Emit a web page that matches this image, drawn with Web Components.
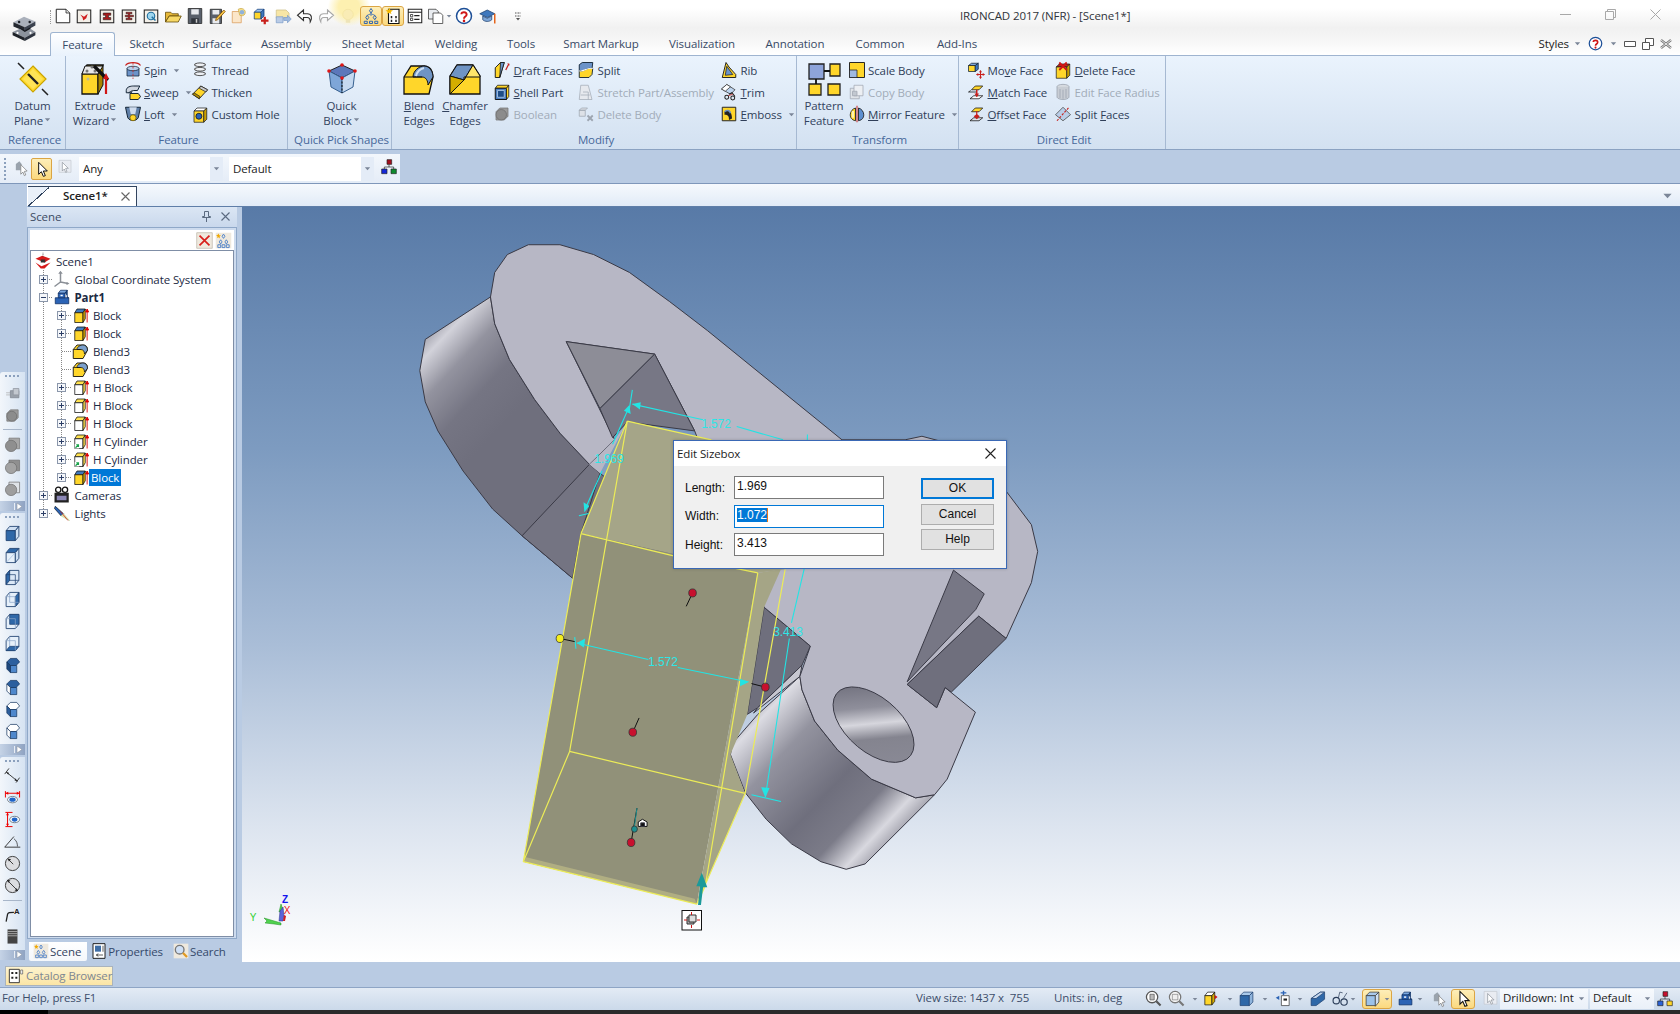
<!DOCTYPE html>
<html>
<head>
<meta charset="utf-8">
<title>IRONCAD 2017</title>
<style>
html, body { margin: 0; height: 100%; overflow: hidden; background: #b9cbe3; }
body { font: 11.5px "Open Sans", "Noto Sans", sans-serif; letter-spacing: -.1px; color: #2f3e58; }
</style>
</head>
<body>
<cad-app></cad-app>
<script>
'use strict';
(function () {
    const DOC = '<path d="M3 3h13l5 5v13H3z" fill="#fff" stroke="#222" stroke-width="1.3"/><path d="M16 3v5h5" fill="#ddd" stroke="#222"/>';
    const BOX = '<rect x="3" y="4" width="18" height="17" fill="#f3efe8" stroke="#222" stroke-width="1.4"/>';
    const YBOX = '<path d="M5 9l3-5h11l-3 5z" fill="#3f78bd" stroke="#111"/><path d="M5 9h11v13H5z" fill="#ffd62a" stroke="#111"/><path d="M16 9l3-5v13l-3 5z" fill="#d9a800" stroke="#111"/><path d="M21.500 22V5M19.500 8l2-4 2 4z" fill="#d00" stroke="#d00" stroke-width="1.200"/>';
    const HBOX = '<path d="M5 9l3-5h11l-3 5z" fill="#ffe14d" stroke="#111"/><path d="M5 9h11v13H5z" fill="#fff" stroke="#111"/><path d="M16 9l3-5v13l-3 5z" fill="#ffe14d" stroke="#111"/><path d="M21.500 22V5M19.500 8l2-4 2 4z" fill="#d00" stroke="#d00" stroke-width="1.200"/>';
    const GCUBE = '<path d="M4 9l5-5h11v11l-5 5H4z" fill="#9b9b9b" stroke="#777"/><circle cx="11" cy="13" r="7" fill="#8c8c8c" stroke="#6d6d6d"/>';
    const FACE = '<path d="M6 9l5-5h10l-5 5z" fill="#ffd62a" stroke="#111"/>';

    const ICONS = {
        doc: DOC,
        docred: BOX + '<path d="M7 10l5 3 5-4-2 6-4 3-1-4z" fill="#d01c1c"/>',
        doci: BOX + '<path d="M7 8h10v3h-3v3h3v3H7v-3h3v-3H7z" fill="#a81c1c" stroke="#111" stroke-width=".7"/>',
        doce: BOX + '<path d="M8 7h8v2h-3v2h5v2h-5v2h3v2H8v-2h3v-2H7v-2h4V9H8z" fill="#a81c1c" stroke="#111" stroke-width=".6"/>',
        docview: BOX + '<circle cx="12" cy="12" r="5" fill="#9fd6ef" stroke="#1f6f9f" stroke-width="1.500"/><path d="M13 13l5 5" stroke="#1f6f9f" stroke-width="2"/>',
        open: '<path d="M2 7h7l2 2h8v3H7l-5 8z" fill="#e7b93a" stroke="#5c4300"/><path d="M7 12h16l-4 8H2z" fill="#f7d866" stroke="#5c4300"/>',
        save: '<path d="M3 2h18v20H3z" fill="#59606b" stroke="#222"/><path d="M7 3h10v7H7z" fill="#e8eaee"/><path d="M7 15h10v7H7z" fill="#30353c"/><path d="M13 16h2v5h-2z" fill="#ccc"/>',
        saveas: '<path d="M3 3h15v19H3z" fill="#59606b" stroke="#222"/><path d="M6 4h9v6H6zM6 15h9v7H6z" fill="#e8eaee"/><path d="M11 15L21 4l2 2-10 11-3 1z" fill="#f7c548" stroke="#7a4a00"/>',
        bulbdoc: '<path d="M3 6h9l3 3v12H3z" fill="#fbe6c9" stroke="#d99b5a"/><path d="M11 3c5-3 11 1 9 6-1 3-5 3-7 2z" fill="#f7df88" stroke="#c9a94a"/><circle cx="16" cy="7" r="3" fill="#8fb2dc"/>',
        addblock: '<path d="M3 7l4-4h9l-4 4z" fill="#9cc3ee" stroke="#123c7a"/><path d="M3 7h9v9H3z" fill="#ffd62a" stroke="#123c7a"/><path d="M12 7l4-4v9l-4 4z" fill="#3f78bd" stroke="#123c7a"/><path d="M17 13v10M12 18h10" stroke="#c8201c" stroke-width="3"/>',
        fadeexport: '<path d="M3 4h13l4 4v7H3z" fill="#f7e6a6" stroke="#cfc08a"/><path d="M3 13h9v8H3z" fill="#b9cbe6" stroke="#7f9fca"/><path d="M13 14h5v-3l5 5-5 5v-3h-5z" fill="#9db9e0" stroke="#7f9fca"/>',
        undo: '<path d="M10 4L2 11l8 7v-4h5c3 0 4 2 4 6 3-5 2-11-4-11h-5z" fill="#fff" stroke="#333" stroke-width="1.500"/>',
        redo: '<path d="M14 4l8 7-8 7v-4H9c-3 0-4 2-4 6-3-5-2-11 4-11h5z" fill="#fff" stroke="#a8a8a8" stroke-width="1.500"/>',
        bulb: '<circle cx="12" cy="10" r="7" fill="#f9ecb5" stroke="#f2e3a0"/><path d="M9 17h6v4H9z" fill="#eee4b8"/>',
        treeflow: '<path d="M12 2l2 3-2 3-2-3zM7 11l2 3-2 3-2-3zM17 11l2 3-2 3-2-3z" fill="none" stroke="#2b63b5" stroke-width="1.300"/><path d="M3 19h4v3H3zM10 19h4v3h-4zM17 19h4v3h-4z" fill="none" stroke="#2b63b5" stroke-width="1.300"/><path d="M12 8v4M7 11l5-2 5 2" stroke="#2b63b5" fill="none"/>',
        treestar: '<path d="M6 3h14v19H6z" fill="#fff" stroke="#111" stroke-width="1.500"/><path d="M9 12h2v3H9zM15 12h2v3h-2zM9 17h2v3H9zM15 17h2v3h-2z" fill="#222"/><path d="M7 1l1.500 3 3.500.5-3 2 1 3-3-2-3 2 1-3-3-2 3.500-.5z" fill="#f5b800"/>',
        list: '<path d="M3 3h18v18H3z" fill="#fff" stroke="#222" stroke-width="1.400"/><path d="M3 7h18" stroke="#222" stroke-width="1.400"/><path d="M6 10h3v3H6zM6 15h3v3H6z" fill="none" stroke="#222"/><path d="M11 11.500h7M11 16.500h7" stroke="#222" stroke-width="1.400"/>',
        copy: '<path d="M2 3h10l3 3v10H2z" fill="#e9ecf0" stroke="#333"/><path d="M8 8h10l3 3v11H8z" fill="#fff" stroke="#333"/>',
        help: '<circle cx="12" cy="12" r="10" fill="#fff" stroke="#1d4f97" stroke-width="2"/><path d="M8.500 9.500C8.500 6 15.500 6 15.500 10c0 3-3.500 2.500-3.500 5.500" fill="none" stroke="#d01616" stroke-width="2.600"/><circle cx="12" cy="18.500" r="1.700" fill="#d01616"/>',
        cap: '<path d="M1 9l10-5 10 5-10 5z" fill="#3f78bd" stroke="#1c3f6e"/><path d="M5 12v5c3 3 9 3 12 0v-5l-6 3z" fill="#7fa7d8" stroke="#1c3f6e"/><path d="M21 9v13" stroke="#e5641b" stroke-width="2"/>',
        arrow: '<path d="M3 8h18l-9 10z" fill="#7b8698"/>',
        grip: '<path d="M6 6h12M6 12h12" stroke="#555" stroke-width="2" stroke-dasharray="2 1"/><path d="M8 16h8l-4 5z" fill="#555"/>',

        spin: '<path d="M4 10h16v10H4z" fill="#6b93c9" stroke="#123"/><ellipse cx="12" cy="10" rx="8" ry="3" fill="#b9d0ec" stroke="#123"/><path d="M12 2v22" stroke="#c8201c" stroke-dasharray="3 2"/><path d="M2 6c3-5 17-5 20 0" fill="none" stroke="#c8201c" stroke-width="1.600"/>',
        sweep: '<path d="M3 10c0-5 6-6 10-6h8l-3 6h-5c-2 0-3 1-3 3H3z" fill="#cfd6e0" stroke="#123" stroke-width="1.300"/><path d="M8 14h11l3 4-3 4H8z" fill="#ffd62a" stroke="#123" stroke-width="1.300"/><path d="M6 13l5-3" stroke="#123"/>',
        loft: '<path d="M2 3h20l-3 14c-3 5-11 5-14 0z" fill="#5f7fa8" stroke="#123" stroke-width="1.300"/><path d="M7 3h10l-2 9H9z" fill="#cfdcee"/><circle cx="12" cy="17" r="4" fill="#ffd62a" stroke="#7a6000"/>',
        thread: '<path d="M5 4c4-2 10-2 14 0v2C15 8 9 8 5 6zM5 10c4-2 10-2 14 0v2c-4 2-10 2-14 0zM5 16c4-2 10-2 14 0v2c-4 2-10 2-14 0z" fill="#eef1f5" stroke="#444" stroke-width="1.200"/>',
        thicken: '<path d="M2 15L13 4l9 5-11 12z" fill="#ffd62a" stroke="#222" stroke-width="1.200"/><path d="M13 4l9 5-2 3-9-5z" fill="#c9c9c9" stroke="#222"/><path d="M2 15l9 6 1-3-8-5z" fill="#b38f00" stroke="#222"/>',
        hole: '<path d="M4 8l4-4h13l-4 4z" fill="#fff" stroke="#222"/><path d="M4 8h13v15H4z" fill="#ffd62a" stroke="#222"/><path d="M17 8l4-4v15l-4 4z" fill="#c99f00" stroke="#222"/><circle cx="10.500" cy="15" r="4" fill="#2b63b5" stroke="#111"/>',
        draft: '<path d="M3 9l7-7h5L9 22H3z" fill="#ffd62a" stroke="#111" stroke-width="1.200"/><path d="M10 2h5L9 22z" fill="#6b93c9" stroke="#111"/><path d="M17 12l4-8" stroke="#c8201c" stroke-width="1.600"/><path d="M19 3l3 .500-.5 3z" fill="#c8201c"/>',
        shell: '<path d="M3 7l3-4h15l-3 4z" fill="#ffd62a" stroke="#111"/><path d="M3 7h15v15H3z" fill="#4d80c2" stroke="#111" stroke-width="1.300"/><path d="M18 7l3-4v15l-3 4z" fill="#ffd62a" stroke="#111"/><path d="M6 10h9v9H6z" fill="#1f4d87" stroke="#bcd4ef"/>',
        boolean: GCUBE,
        split: '<path d="M3 5l4-3h14l-1 9-5 2H3z" fill="#6b93c9" stroke="#123" stroke-width="1.200"/><path d="M3 13c6 2 10-5 18-3l-1 8-4 4H3z" fill="#ffd62a" stroke="#123" stroke-width="1.200"/><path d="M3 13c6 2 10-5 18-3" fill="none" stroke="#fff" stroke-width="1.500"/>',
        stretch: '<path d="M5 3h10l5 19H3z" fill="#e6e9ee" stroke="#a3abb6"/><path d="M8 12h7v10M5 16h12" stroke="#a3abb6" fill="none"/>',
        delbody: '<path d="M3 7l3-3h8l-3 3zM3 7h8v8H3z" fill="#dde1e7" stroke="#9da5b0"/><path d="M14 14l7 7M21 14l-7 7" stroke="#9da5b0" stroke-width="2.400"/>',
        rib: '<path d="M3 22L8 2l4 6 9 10v4z" fill="#ffd62a" stroke="#222" stroke-width="1.300"/><path d="M7 19L9 7l8 11z" fill="#6b93c9" stroke="#222"/>',
        trim: '<path d="M2 8l7-6 11 7-6 6z" fill="#bcd3ee" stroke="#333"/><path d="M2 8l7-6 5 3-7 6z" fill="#fff" stroke="#333"/><path d="M12 15l4-2 4 5" stroke="#222" fill="none" stroke-width="1.400"/><circle cx="9" cy="19" r="2.600" fill="none" stroke="#222" stroke-width="1.400"/><circle cx="17" cy="20" r="2.600" fill="none" stroke="#222" stroke-width="1.400"/><path d="M11 17l6-2" stroke="#c8201c"/>',
        emboss: '<path d="M3 3h18v18H3z" fill="#ffd62a" stroke="#222" stroke-width="1.300"/><path d="M6 9c5-5 10 0 10 9l-4 2c0-5-1-7-6-7z" fill="#222"/><path d="M6 9c3-3 7-2 8 2" stroke="#6b93c9" fill="none" stroke-width="2"/>',
        scale: '<path d="M2 2h20v20H2z" fill="#ffd62a" stroke="#222" stroke-width="1.300"/><path d="M2 12h10v10H2z" fill="#9fb9e0" stroke="#222"/>',
        copybody: '<path d="M3 7h12v14H3z" fill="#dfe3e8" stroke="#a0a7b1"/><path d="M8 3h12v14H8z" fill="#eceff3" stroke="#a0a7b1"/><path d="M6 11h6v6H6z" fill="#c2c8d0" stroke="#a0a7b1"/>',
        mirror: '<path d="M10 4c-4 1-7 5-7 9 0 4 2 7 7 8z" fill="#ffd62a" stroke="#222" stroke-width="1.200"/><path d="M14 4c4 1 7 5 7 9 0 4-2 7-7 8z" fill="#5d8fd0" stroke="#222" stroke-width="1.200"/><path d="M12 1v22" stroke="#c8201c" stroke-width="1.300"/><path d="M5 8h3v9H5z" fill="#fff3b0"/>',
        moveface: '<path d="M2 6l4-3h9l-4 3z" fill="#7da6dc" stroke="#123"/><path d="M2 6h9v8H2z" fill="#ffd62a" stroke="#123"/><path d="M11 6l4-3v8l-4 3z" fill="#3f78bd" stroke="#123"/><path d="M18 13v10M13 18h10" stroke="#c8201c" stroke-width="1.400"/><path d="M18 12l2 3h-4zM18 24l2-3h-4zM12 18l3-2v4zM24 18l-3-2v4z" fill="#c8201c"/>',
        matchface: FACE + '<path d="M4 21l5-4h12l-5 4z" fill="#fff" stroke="#111"/><path d="M13 9v9" stroke="#c8201c" stroke-width="2"/><path d="M10 14h6l-3 5z" fill="#c8201c"/><path d="M2 12h10M2 12l3-2" stroke="#111"/>',
        offsetface: FACE + '<path d="M4 21l5-4h12l-5 4z" fill="#dfe3e8" stroke="#111"/><path d="M13 8v10" stroke="#c8201c" stroke-width="1.600"/><path d="M9 15l4 4 4-4-4-3z" fill="#c8201c"/>',
        deleteface: '<path d="M3 8l4-4h14l-4 4z" fill="#c8201c" stroke="#222"/><path d="M3 8h14v15H3z" fill="#ffd62a" stroke="#222"/><path d="M17 8l4-4v15l-4 4z" fill="#c99f00" stroke="#222"/><path d="M7 2l10 10M17 2L7 12" stroke="#d01616" stroke-width="2.400"/>',
        editradius: '<ellipse cx="12" cy="5" rx="8" ry="3.200" fill="#d7dbe1" stroke="#9aa2ad"/><path d="M4 5v14c2 4 14 4 16 0V5" fill="#c8cdd4" stroke="#9aa2ad"/><path d="M8 8v12M12 9v12M16 8v12" stroke="#9aa2ad"/>',
        splitfaces: '<path d="M2 13l10-10 10 10-10 8z" fill="#b9cde8" stroke="#444"/><path d="M4 21L20 3" stroke="#c8201c" stroke-width="1.500" stroke-dasharray="3 2"/>',

        scene: '<path d="M2 9l9-4 11 4-8 5z" fill="#d61a1a"/><path d="M2 14l8 5 12-5-8 8H9z" fill="#d61a1a"/><path d="M9 10h6v4H9z" fill="#333"/><path d="M12 1v5" stroke="#333" stroke-dasharray="1 1"/>',
        coord: '<path d="M10 3v13M10 16l10 2M10 16l-8 6" stroke="#8a8f96" stroke-width="2" fill="none"/><path d="M10 1l3 4H7zM22 18l-4 2v-4z" fill="#8a8f96"/>',
        part: '<path d="M3 13h18v8H3z" fill="#2b63b5" stroke="#0c2c60"/><path d="M7 7l3-4h9l-3 4z" fill="#79a7e0" stroke="#0c2c60"/><path d="M7 7h9v6H7z" fill="#2b63b5" stroke="#0c2c60"/><path d="M16 7l3-4v10h2" fill="#1b477f" stroke="#0c2c60"/><path d="M10 9h3v2h-3z" fill="#fff"/>',
        yblock: YBOX, hblock: HBOX,
        hcyl: HBOX + '<path d="M5 16h6v6H5z" fill="#fff"/><path d="M6 21l4-4M7 17h3v3" stroke="#1aa34a" stroke-width="1.500" fill="none"/>',
        blend: '<path d="M3 10l5-6h9c4 0 5 4 5 7l-6 11H3z" fill="#ffd62a" stroke="#111" stroke-width="1.200"/><path d="M8 10c0-4 5-6 8-6 5 0 6 5 6 7l-4 5c0-4-2-6-5-6z" fill="#7a9fcc" stroke="#111"/><path d="M3 10h10" stroke="#111"/>',
        camera: '<circle cx="7" cy="5" r="3.500" fill="#fff" stroke="#111" stroke-width="1.800"/><circle cx="16" cy="5" r="3.500" fill="#fff" stroke="#111" stroke-width="1.800"/><path d="M2 9h19v13H2z" fill="#222"/><path d="M5 13h13v6H5z" fill="#8b87b5"/>',
        lights: '<path d="M3 3l11 10-3 3L2 6z" fill="#2b63b5" stroke="#123"/><path d="M11 16l3-3 8 9z" fill="#f2e6a0" stroke="#bda"/><path d="M10 10l10 12" stroke="#c8201c"/>',
        clear: '<path d="M1 1h22v22H1z" fill="#efe9de" stroke="#bdb6a9"/><path d="M5 5l14 14M19 5L5 19" stroke="#d8201c" stroke-width="2.400"/>',
        find: '<path d="M1 1h22v22H1z" fill="#efe9de"/><path d="M12 3l2 3-2 3-2-3zM8 11l2 3-2 3-2-3zM16 11l2 3-2 3-2-3z" fill="none" stroke="#4a80c8" stroke-width="1.300"/><path d="M4 18h4v4H4zM10 18h4v4h-4zM16 18h4v4h-4z" fill="none" stroke="#4a80c8" stroke-width="1.300"/><path d="M5 2l1 2.500 2.500.5-2 1.500.5 2.500L5 7.500 3 8.500 3.500 6 1.500 4.500 4 4z" fill="#f0a800"/>',
        props: '<path d="M3 1h18v22H3z" fill="#fff" stroke="#111" stroke-width="1.400"/><path d="M6 4h9v9H6z" fill="#3f6ea6"/><path d="M17 4h2v9h-2z" fill="#888"/><path d="M18 18H8M8 18l3-2M8 18l3 2" stroke="#111" fill="none"/>',
        search: '<path d="M1 1h22v22H1z" fill="#efe9de"/><circle cx="10" cy="10" r="6.500" fill="#cfe0f6" stroke="#777" stroke-width="2"/><path d="M15 15l6 6" stroke="#e09a22" stroke-width="3.400"/>',
        catalog: '<path d="M2 2h15v20H2z" fill="#fff" stroke="#222" stroke-width="1.300"/><path d="M5 6h3v3H5zM11 6h3v3h-3zM5 13h3v3H5zM11 13h3v3h-3z" fill="#222"/><path d="M19 3h3v6h-3z" fill="#fff" stroke="#555"/>',

        stk1: '<path d="M3 11h6M3 14h6" stroke="#aaa"/><path d="M9 8h12v10H9z" fill="#9aa1aa" stroke="#7d848e"/><path d="M13 5h8v9H13z" fill="#c3c8cf" stroke="#8b919a"/>',
        stk2: GCUBE,
        stk3: '<path d="M7 3h15v15H7z" fill="#a6a6a6" stroke="#777"/><circle cx="10" cy="14" r="8" fill="#8f8f8f" stroke="#6f6f6f"/>',
        stk4: '<path d="M7 3h15v15H7z" fill="#8f8f8f" stroke="#6f6f6f"/><circle cx="10" cy="14" r="8" fill="#a3a3a3" stroke="#6f6f6f"/>',
        stk5: '<path d="M7 3h15v15H7z" fill="#dfe3e8" stroke="#6f6f6f"/><circle cx="10" cy="14" r="8" fill="#9e9e9e" stroke="#6f6f6f"/>',
        v1: '<path d="M3 8l5-6h13l-5 6z" fill="#cfe0f3" stroke="#1c3f6e" stroke-width="1.200"/><path d="M3 8h13v14H3z" fill="#2f68a8" stroke="#1c3f6e" stroke-width="1.200"/><path d="M16 8l5-6v14l-5 6z" fill="#cfe0f3" stroke="#1c3f6e" stroke-width="1.200"/>',
        v2: '<path d="M3 8l5-6h13l-5 6z" fill="#2f68a8" stroke="#1c3f6e" stroke-width="1.200"/><path d="M3 8h13v14H3z" fill="#e6f0fa" stroke="#1c3f6e" stroke-width="1.200"/><path d="M16 8l5-6v14l-5 6z" fill="#cfe0f3" stroke="#1c3f6e" stroke-width="1.200"/><path d="M3 22l13-14" stroke="#9fbbdc"/>',
        v3: '<path d="M3 8l5-6h13v14l-5 6H3z" fill="#dbe8f6" stroke="#1c3f6e" stroke-width="1.200"/><path d="M3 8l5-6v14l-5 6z" fill="#2f68a8" stroke="#1c3f6e" stroke-width="1.200"/><path d="M8 16h13M3 8h13v14" fill="none" stroke="#1c3f6e"/>',
        v4: '<path d="M3 8l5-6h13v14l-5 6H3z" fill="#e6f0fa" stroke="#1c3f6e" stroke-width="1.200"/><path d="M16 8l5-6v14l-5 6z" fill="#2f68a8" stroke="#1c3f6e" stroke-width="1.200"/><path d="M3 8h13v14M8 2v14h13" fill="none" stroke="#8aa5c8"/>',
        v5: '<path d="M3 8l5-6h13v14l-5 6H3z" fill="#e6f0fa" stroke="#1c3f6e" stroke-width="1.200"/><path d="M8 2h13v14H8z" fill="#2f68a8" stroke="#1c3f6e"/><path d="M3 8h13v14" fill="none" stroke="#8aa5c8"/>',
        v6: '<path d="M3 8l5-6h13v14l-5 6H3z" fill="#e6f0fa" stroke="#1c3f6e" stroke-width="1.200"/><path d="M3 22l5-6h13l-5 6z" fill="#2f68a8" stroke="#1c3f6e"/><path d="M3 8h13v14M8 2v14" fill="none" stroke="#8aa5c8"/>',
        c1: '<path d="M4 7l5-5h9l4 5-5 5H9z" fill="#2c5f9e" stroke="#13315a"/><path d="M9 12h9v10H9z" fill="#4f88cc" stroke="#13315a"/><path d="M4 7l5 5v10L4 17z" fill="#1f4a80" stroke="#13315a"/>',
        c2: '<path d="M4 7l5-5h9l4 5-5 5H9z" fill="#2c5f9e" stroke="#13315a"/><path d="M9 12h9v10H9z" fill="#4f88cc" stroke="#13315a"/><path d="M4 7l5 5v10L4 17z" fill="#fff" stroke="#13315a"/>',
        c3: '<path d="M4 7l5-5h9l4 5-5 5H9z" fill="#fff" stroke="#13315a"/><path d="M9 12h9v10H9z" fill="#4f88cc" stroke="#13315a"/><path d="M4 7l5 5v10L4 17z" fill="#2c5f9e" stroke="#13315a"/>',
        c4: '<path d="M4 7l5-5h9l4 5-5 5H9z" fill="#fff" stroke="#13315a"/><path d="M9 12h9v10H9z" fill="#4f88cc" stroke="#13315a"/><path d="M4 7l5 5v10L4 17z" fill="#fff" stroke="#13315a"/>',
        mdim: '<path d="M3 7l16 13M7 2L1 10M22 15l-5 7" stroke="#222" fill="none" stroke-width="1.200"/><path d="M3 7l4 1-1 3zM19 20l-4-1 1-3z" fill="#222"/>',
        hdim: '<path d="M2 3v9M22 3v9M3 6h18" stroke="#e00" stroke-width="1.400"/><path d="M2 6l4-2v4zM22 6l-4-2v4z" fill="#e00"/><ellipse cx="12" cy="15" rx="7" ry="4.500" fill="#fff" stroke="#456"/><ellipse cx="12" cy="15" rx="4.500" ry="3" fill="#1f64c8"/>',
        vdim: '<path d="M2 2h10M2 22h10M5 3v18" stroke="#e00" stroke-width="1.400"/><path d="M5 2l-2 4h4zM5 22l-2-4h4z" fill="#e00"/><ellipse cx="15" cy="12" rx="7" ry="4.500" fill="#fff" stroke="#456"/><ellipse cx="15" cy="12" rx="4" ry="3" fill="#1f64c8"/>',
        adim: '<path d="M1 20h22M1 20L14 5" stroke="#222" fill="none" stroke-width="1.200"/><path d="M14 8c4 3 5 7 5 11" stroke="#222" fill="none"/>',
        rdim: '<circle cx="12" cy="12" r="10" fill="#dcdde0" stroke="#333" stroke-width="1.300"/><path d="M13 13L6 6" stroke="#222" stroke-width="1.200"/><path d="M5 5l5 1-3 3z" fill="#222"/>',
        ddim: '<circle cx="12" cy="12" r="10" fill="#dcdde0" stroke="#333" stroke-width="1.300"/><path d="M5 5l14 14" stroke="#222" stroke-width="1.200"/><path d="M4 4l5 1-3 3zM20 20l-5-1 3-3z" fill="#222"/>',
        leader: '<path d="M3 22l2-10c0-3 3-3 9-3" fill="none" stroke="#222" stroke-width="1.800"/><text x="14" y="11" font-family="Liberation Sans" font-size="11" font-weight="700" fill="#222">A</text>',
        hatch: '<path d="M5 2h14v20H5z" fill="#444"/><path d="M5 5h14M5 8h14M5 11h14" stroke="#ccc"/>',

        zoomfit: '<circle cx="10" cy="10" r="8" fill="#fff" stroke="#555" stroke-width="1.800"/><path d="M7 6h6v8H7z" fill="#bbb" stroke="#555"/><path d="M16 16l6 6" stroke="#555" stroke-width="3"/>',
        zoomwin: '<circle cx="10" cy="10" r="8" fill="#fff" stroke="#777" stroke-width="1.800"/><path d="M6 6h8v8H6z" fill="#eee" stroke="#777"/><path d="M16 16l6 6" stroke="#777" stroke-width="3"/>',
        boxred: '<path d="M4 8l4-5h10l-4 5z" fill="#fff" stroke="#111"/><path d="M4 8h10v13H4z" fill="#ffd62a" stroke="#111"/><path d="M14 8l4-5v13l-4 5z" fill="#d8ac00" stroke="#111"/><path d="M18 7l4 3-4 3z" fill="#d01616"/>',
        cubeblue: '<path d="M3 8l5-5h13l-5 5z" fill="#a9c9ea" stroke="#1c3f6e"/><path d="M3 8h13v14H3z" fill="#2f68a8" stroke="#1c3f6e"/><path d="M16 8l5-5v14l-5 5z" fill="#8fb4dc" stroke="#1c3f6e"/>',
        movecam: '<path d="M12 1v6M8 4h8" stroke="#2b63b5" stroke-width="2"/><path d="M9 8h11v14H9z" fill="#fff" stroke="#333"/><path d="M12 12h5v3h-5z" fill="#222"/><path d="M1 11l5-3v6z" fill="#2b63b5"/>',
        prism: '<path d="M3 12L16 3h6v10L10 22H3z" fill="#2f68a8" stroke="#1c3f6e"/><path d="M16 3h6L10 12H3z" fill="#c8d9ee" stroke="#1c3f6e"/>',
        glasses: '<circle cx="6" cy="15" r="4.500" fill="none" stroke="#2a3c58" stroke-width="1.600"/><circle cx="17" cy="17" r="4.500" fill="none" stroke="#2a3c58" stroke-width="1.600"/><path d="M9 11l2-8 4 1M16 12l5-8" fill="none" stroke="#2a3c58"/>',
        lightbox: '<path d="M3 8l5-5h13l-5 5z" fill="#a9c9ea" stroke="#333"/><path d="M3 8h13v14H3z" fill="#9cc2ea" stroke="#333"/><path d="M16 8l5-5v14l-5 6z" fill="#cfe0f3" stroke="#333"/>',
        greycursor: '<path d="M4 7l5-4 4 5h-2v8H4z" fill="#9aa3ad"/><path d="M11 8l9 9-4 .500 2 5-2 1-2-5-3 3z" fill="#fff" stroke="#777"/>',
        cursor: '<path d="M7 2v18l4-4 3 7 3-1-3-7h6z" fill="#fff" stroke="#111" stroke-width="1.500"/>',
        cursorgrey: '<path d="M3 2h18v18H3z" fill="#e9ecf2" stroke="#c3c8d0"/><path d="M8 5v13l3-3 2 5 2-1-2-5h4z" fill="#fff" stroke="#8a8f98"/>',
        org: '<path d="M9 1h7v7H9z" fill="#a30f1e" stroke="#222"/><path d="M1 15h8v7H1z" fill="#1428d8" stroke="#222"/><path d="M15 15h8v7h-8z" fill="#0d8a2d" stroke="#222"/><path d="M12 8v4M5 15v-3h14v3" fill="none" stroke="#222"/>',
        orgy: '<path d="M9 1h7v7H9z" fill="#c8102e" stroke="#222"/><path d="M1 15h8v7H1z" fill="#2b63d8" stroke="#222"/><path d="M15 15h8v7h-8z" fill="#ffd62a" stroke="#222"/><path d="M12 8v4M5 15v-3h14v3" fill="none" stroke="#222"/>',
        app: '<path d="M3 9l13-7 14 6-13 7z" fill="#aab0bb"/><path d="M3 9l14 6v5L3 14z" fill="#23272f"/><path d="M17 15l13-7v5l-13 7z" fill="#3a414e"/><circle cx="10" cy="8.500" r="1.500" fill="#1c2027"/><circle cx="23" cy="8.500" r="1.500" fill="#1c2027"/><path d="M11 16l6 3 7-4v6l-7 4-6-3z" fill="#15181e"/><path d="M2 21l9-4 6 4 7-4 6 4-13 7z" fill="#8b929d"/><path d="M2 21l15 7v4L2 25z" fill="#1e2229"/><path d="M17 28l13-7v4l-13 7z" fill="#2e343f"/><circle cx="8" cy="22" r="1.300" fill="#fff"/><circle cx="24" cy="22" r="1.300" fill="#fff"/>',

        datum: '<path d="M16 3l13 13-13 13L3 16z" fill="#ffd92e" stroke="#caa400" stroke-width="1.200"/><path d="M16 6l10 10-10 10L6 16z" fill="#ffe456"/><path d="M11 11l10 10" stroke="#222" stroke-width="2.400"/><path d="M1 0l6 6M25 26l6 6" stroke="#222" stroke-width="1.500"/>',
        extrude: '<path d="M3 11L8 2h16l-5 9v20H3z" fill="#ffd62a" stroke="#111" stroke-width="1.300"/><path d="M19 11l5-9v20l-5 9z" fill="#a98400" stroke="#111"/><path d="M3 11h16" stroke="#111"/><path d="M6 3h18l-5 8H3z" fill="#e8e8e8" stroke="#111"/><circle cx="8" cy="8" r="1.500" fill="#777"/><circle cx="13" cy="4" r="1.500" fill="#777"/><circle cx="16" cy="8" r="1.500" fill="#777"/><circle cx="9" cy="16" r="1.500" fill="#bb9"/><path d="M15 3l14 14" stroke="#111" stroke-width="3.400"/><path d="M27 31V13" stroke="#d01616" stroke-width="2.200"/><path d="M24 16l3-6 3 6z" fill="#d01616"/>',
        quickblock: '<path d="M3 8L16 2l13 6-13 7z" fill="#5c77ba" stroke="#222"/><path d="M3 8l13 7v15L5 24z" fill="#7ea6d8" stroke="#37608f"/><path d="M29 8L16 15v15l11-6z" fill="#c5d9f0" stroke="#37608f"/><path d="M16 15v15" stroke="#111" stroke-dasharray="2 1.500"/><circle cx="3" cy="8" r="1.800" fill="#e01616"/><circle cx="16" cy="2" r="1.800" fill="#e01616"/><circle cx="29" cy="8" r="1.800" fill="#e01616"/><circle cx="16" cy="15" r="1.800" fill="#e01616"/>',
        blendbig: '<path d="M1 14L8 3h14l-1 0c6 0 9 5 9 11L26 31H1z" fill="#ffd62a" stroke="#111" stroke-width="1.300"/><path d="M10 14C10 8 16 3 21 3c6 0 9 6 9 11l-5 8c0-4-2-8-6-8z" fill="#6f94c4" stroke="#111"/><path d="M1 14h18" stroke="#111"/><path d="M21 5c-4 1-7 4-8 8" stroke="#cfe0f3" stroke-width="2" fill="none"/>',
        chamferbig: '<path d="M1 13L8 2h16l7 11v18H1z" fill="#ffd62a" stroke="#111" stroke-width="1.300"/><path d="M8 2h16l-9 15-14-4z" fill="#6f94c4" stroke="#111"/><path d="M15 17L24 2l7 11v1H15z" fill="#ffe56a" stroke="#111"/><path d="M1 13v18l14-14z" fill="#d4ad00" stroke="#111"/>',
        pattern: '<path d="M1 1h15v15H1z" fill="#8ea4da" stroke="#222" stroke-width="1.300"/><path d="M22 1h10v12H22z" fill="#ffd62a" stroke="#222" stroke-width="1.300"/><path d="M1 21h12v11H1z" fill="#ffd62a" stroke="#222" stroke-width="1.300"/><path d="M20 21h12v11H20z" fill="#ffd62a" stroke="#222" stroke-width="1.300"/><path d="M16 8h6M8 16v5" stroke="#111" stroke-width="1.800"/>'
    };

    class CadElement extends HTMLElement {
        connectedCallback() {
            if (this.shadowRoot) return;
            this.attachShadow({mode: 'open'}).innerHTML = this._render();
        }

        attr(name, fallback) {
            return this.hasAttribute(name) ? this.getAttribute(name) : fallback;
        }
    }

    class CadIcon extends CadElement {
        _render() {
            const size = this.attr('size', '16');
            const vb = this.attr('vb', '24');
            return `<style>:host{display:inline-flex;flex:none;line-height:0}svg{display:block;overflow:visible}</style>
<svg width="${size}" height="${size}" viewBox="0 0 ${vb} ${vb}">${ICONS[this.attr('name', '')] || ''}</svg>`;
        }
    }

    // a row of icons whose gaps come from the icon centres
    function iconRun(items, startX, size) {
        let right = startX;
        return items.map(it => {
            const w = it.w || 20;
            const left = it.cx - w / 2;
            const ml = left - right;
            right = left + w;
            const cls = it.hl ? 'it hl' : 'it';
            const inner = it.extra || '';
            return `<span class="${cls}" style="width:${w}px;margin-left:${ml}px"><cad-icon name="${it.n}" size="${it.s || size}"></cad-icon>${inner}</span>`;
        }).join('');
    }
    const RUN_CSS = `.it{display:inline-flex;align-items:center;justify-content:center;height:20px;flex:none;box-sizing:border-box}
.hl{background:linear-gradient(#fdeeb9,#fbd97f);border:1px solid #dba544;border-radius:3px}`;

    class CadHeader extends CadElement {
        _render() {
            const quick = iconRun([
                {n: 'doc', cx: 63}, {n: 'docred', cx: 84}, {n: 'doci', cx: 107}, {n: 'doce', cx: 129},
                {n: 'docview', cx: 151}, {n: 'open', cx: 173}, {n: 'save', cx: 195}, {n: 'saveas', cx: 217},
                {n: 'bulbdoc', cx: 239}, {n: 'addblock', cx: 261}, {n: 'fadeexport', cx: 283}, {n: 'undo', cx: 305},
                {n: 'redo', cx: 326}, {n: 'bulb', cx: 348}, {n: 'treeflow', cx: 371, w: 22, hl: 1},
                {n: 'treestar', cx: 393, w: 22, hl: 1}, {n: 'list', cx: 415}, {n: 'copy', cx: 436},
                {n: 'arrow', cx: 449, w: 7, s: 6}, {n: 'help', cx: 464}, {n: 'cap', cx: 488}, {n: 'grip', cx: 518, s: 12}
            ], 0, 18);
            const tabs = [['Feature', 65], ['Sketch', 64], ['Surface', 66], ['Assembly', 82], ['Sheet Metal', 92],
                ['Welding', 74], ['Tools', 56], ['Smart Markup', 104], ['Visualization', 98], ['Annotation', 88],
                ['Common', 82], ['Add-Ins', 72]];
            const tabHtml = tabs.map((t, i) =>
                `<span class="tab${i === 0 ? ' on' : ''}" style="width:${t[1]}px">${t[0]}</span>`).join('');
            return `<style>
:host{display:block;height:55px;position:relative;background:linear-gradient(#fff 0,#fff 8px,#f1f1f1 28px,#f7f7f7 42px,#fff 54px)}
.appicon{position:absolute;left:11px;top:15px}
.glow{position:absolute;left:328px;top:-12px;width:42px;height:38px;border-radius:50%;background:radial-gradient(#fdf0b0 35%,rgba(255,244,190,0) 72%)}
.quick{display:flex;align-items:center;height:32px;position:relative}
.grip0{position:absolute;left:50px;top:10px;height:14px;width:1px;border-left:1px dotted #999}
.title{margin-left:432px;width:173px;white-space:nowrap;color:#30343a;margin-top:-1px}
.win{display:flex;margin-left:auto;align-items:center;padding-right:2px;margin-top:-4px}
.win span{display:inline-flex;width:45px;justify-content:center}
${RUN_CSS}
.tabs{display:flex;height:23px;margin-left:50px;align-items:stretch;position:relative}
.tab{display:flex;align-items:center;justify-content:center;color:#384a66;box-sizing:border-box;flex:none}
.tab.on{background:linear-gradient(#fff,#e9f2fc);border:1px solid #9eb4d0;border-bottom:0;border-radius:3px 3px 0 0;height:24px}
.tools{margin-left:auto;display:flex;align-items:center;padding-right:8px}
.tools .styles{color:#222;margin-right:5px}
</style>
<div class="glow"></div>
<cad-icon class="appicon" name="app" vb="32" size="26"></cad-icon>
<div class="quick"><div class="grip0"></div>${quick}
  <span class="title">IRONCAD 2017 (NFR) - [Scene1*]</span>
  <span class="win"><span><svg width="11" height="11"><path d="M0 5.500h11" stroke="#a8a8a8"/></svg></span><span><svg width="11" height="11"><path d="M.5 2.500h8v8h-8zM2.500 2.500v-2h8v8h-2" fill="none" stroke="#a8a8a8"/></svg></span><span><svg width="11" height="11"><path d="M.5.5l10 10M10.500.5l-10 10" stroke="#a8a8a8"/></svg></span></span>
</div>
<div class="tabs">${tabHtml}
  <span class="tools"><span class="styles">Styles</span>
    <cad-icon name="arrow" size="7"></cad-icon><span style="width:7px"></span>
    <cad-icon name="help" size="15"></cad-icon><span style="width:7px"></span>
    <cad-icon name="arrow" size="7"></cad-icon><span style="width:7px"></span>
    <svg width="12" height="8"><path d="M.5 1.500h11v5H.5z" fill="#fff" stroke="#555"/></svg><span style="width:6px"></span>
    <svg width="12" height="12"><path d="M.5 4.500h7v7h-7zM3.500 4.500v-4h8v7h-4" fill="#fff" stroke="#555"/></svg><span style="width:6px"></span>
    <svg width="12" height="10"><path d="M1 1l10 8M11 1L1 9" stroke="#777" stroke-width="2.400"/><path d="M1 1l10 8M11 1L1 9" stroke="#fff" stroke-width=".8"/></svg>
  </span>
</div>`;
        }
    }

    class RibbonBar extends CadElement {
        _render() {
            return `<style>:host{display:flex;height:95px;box-sizing:border-box;border-top:1px solid #9fb4d0;border-bottom:1px solid #8ba2c2;background:linear-gradient(#eaf3fd,#d3e1f1)}</style><slot></slot>`;
        }
    }

    class RibbonGroup extends CadElement {
        _render() {
            return `<style>
:host{display:flex;flex-direction:column;flex:none;box-sizing:border-box;width:${this.attr('w', '100')}px;border-right:1px solid #a6b9d2}
.body{display:flex;height:76px;padding-left:${this.attr('pad', '0')}px}
.label{height:16px;text-align:center;color:#47689a;line-height:15px;white-space:nowrap;padding-left:4px}
</style><div class="body"><slot></slot></div><div class="label">${this.attr('label', '')}</div>`;
        }
    }

    class RibbonBig extends CadElement {
        _render() {
            const arrow = this.hasAttribute('arrow') ? '<cad-icon class="ar" name="arrow" size="7"></cad-icon>' : '';
            return `<style>
:host{display:flex;flex-direction:column;align-items:center;flex:none;width:${this.attr('w', '50')}px;margin-left:${this.attr('ml', '0')}px;padding-top:7px;box-sizing:border-box;color:#33435f;white-space:nowrap}
.t{margin-top:3px;line-height:15px;text-align:center}
.ar{vertical-align:2px;margin-left:1px}
</style><cad-icon name="${this.attr('icon', '')}" vb="32" size="32"></cad-icon>
<div class="t"><slot></slot>${arrow}</div>`;
        }
    }

    class RibbonCol extends CadElement {
        _render() {
            return `<style>:host{display:flex;flex-direction:column;flex:none;padding-top:3px;width:${this.attr('w', '60')}px;margin-left:${this.attr('ml', '0')}px}</style><slot></slot>`;
        }
    }

    class RibbonSmall extends CadElement {
        _render() {
            const off = this.hasAttribute('disabled');
            const arrow = this.hasAttribute('arrow') ? '<cad-icon name="arrow" size="7" style="margin-left:6px"></cad-icon>' : '';
            return `<style>
:host{display:flex;align-items:center;height:22px;white-space:nowrap;color:${off ? '#a2acb9' : '#2f3e58'}}
.ic{display:inline-flex;width:17px;justify-content:center;margin-right:3px}
</style><span class="ic"><cad-icon name="${this.attr('icon', '')}" size="18"></cad-icon></span><span><slot></slot></span>${arrow}`;
        }
    }

    class SelBar extends CadElement {
        _render() {
            const combo = (text, w) => `<span class="combo" style="width:${w}px"><span class="v">${text}</span><span class="dd"><cad-icon name="arrow" size="7"></cad-icon></span></span>`;
            return `<style>
:host{display:block;height:34px;box-sizing:border-box;border-bottom:1px solid #7f97ba;padding-top:4px}
.bar{display:flex;align-items:center;width:400px;height:29px;background:linear-gradient(#f3f7fc,#e4ecf7)}
.grip{width:2px;height:22px;margin-left:4px;border-left:2px dotted #8ba0bd}
.cur{display:inline-flex;align-items:center;justify-content:center;box-sizing:border-box}
.cur.on{width:21px;height:22px;background:linear-gradient(#fdeeb9,#fbd97f);border:1px solid #dba544;border-radius:2px}
.combo{display:flex;height:24px;background:#fff;color:#222;flex:none}
.v{flex:1;padding-left:4px;line-height:23px}
.dd{width:13px;background:#e4ecf7;display:flex;align-items:center;justify-content:center}
</style><div class="bar"><span class="grip"></span>
<span style="margin-left:5px;width:16px"><cad-icon name="greycursor" size="17"></cad-icon></span>
<span class="cur on" style="margin-left:2px"><cad-icon name="cursor" size="16"></cad-icon></span>
<span style="margin-left:5px;width:16px"><cad-icon name="cursorgrey" size="16"></cad-icon></span>
<span style="margin-left:6px"></span>${combo('Any', 144)}<span style="width:6px"></span>${combo('Default', 145)}
<span style="margin-left:7px"><cad-icon name="org" size="16"></cad-icon></span></div>`;
        }
    }

    class DocTabs extends CadElement {
        _render() {
            return `<style>
:host{display:flex;height:23px;margin-left:27px;box-sizing:border-box;padding-top:2px;background:linear-gradient(#f6f9fd,#e1ebf7);border-bottom:1px solid #5f7ea8;border-left:1px solid #fff}
.tab{display:flex;width:109px;height:20px;background:#fff;border-right:1px solid #33455f;border-top:1px solid #33455f;box-sizing:border-box}
.slant{width:21px;height:19px;flex:none;background:linear-gradient(to bottom right,#e9f0f9 49%,#33455f 49%,#33455f 53%,#fff 53%)}
.name{margin-left:14px;font-weight:600;color:#222;line-height:18px;width:52px;white-space:nowrap}
.x{margin-left:6px;align-self:center;line-height:0}
.dn{margin-left:auto;padding-right:7px;align-self:center}
</style><div class="tab"><span class="slant"></span><span class="name">Scene1*</span><span class="x"><svg width="9" height="9"><path d="M.5.5l8 8M8.500.5l-8 8" stroke="#666" stroke-width="1.100"/></svg></span></div>
<span class="dn"><cad-icon name="arrow" size="11"></cad-icon></span>`;
        }
    }

    class SideTools extends CadElement {
        _render() {
            const seg = (rows, top) => {
                const body = rows.map(r => r === '-'
                    ? '<div class="sep"></div>'
                    : `<div class="i"><cad-icon name="${r}" size="17"></cad-icon></div>`).join('');
                return `<div class="seg"><div class="gr" style="height:${top}px"></div>${body}</div>`
                    + '<div class="chev"><svg width="8" height="9"><path d="M0 1v7" stroke="#fff" stroke-width="1.500"/><path d="M3 1l5 3.500L3 8z" fill="#fff" stroke="#8a93a3" stroke-width=".6"/></svg></div>';
            };
            return `<style>
:host{display:flex;flex-direction:column;flex:none;width:27px;box-sizing:border-box;padding:165px 2px 0 0}
.seg{background:linear-gradient(90deg,#f2f6fb,#d6e3f2);border-radius:3px 0 0 0;padding-bottom:2px}
.gr{background:repeating-linear-gradient(90deg,#8ba0bd 0 2px,transparent 2px 4px) 5px 3px/15px 2px no-repeat}
.i{height:22px;display:flex;align-items:center;justify-content:center}
.sep{height:7px;background:linear-gradient(#a8b6c9,#a8b6c9) 3px 3px/19px 1px no-repeat}
.chev{height:11px;margin-bottom:2px;display:flex;align-items:center;justify-content:flex-end;padding-right:3px;background:linear-gradient(90deg,#c5d3e6,#8fa3c2)}
</style>${seg(['stk1', 'stk2', '-', 'stk3', 'stk4', 'stk5'], 10)}
${seg(['v1', 'v2', 'v3', 'v4', 'v5', 'v6', 'c1', 'c2', 'c3', 'c4'], 9)}
${seg(['mdim', 'hdim', 'vdim', 'adim', 'rdim', 'ddim', '-', 'leader', 'hatch'], 8)}`;
        }
    }

    class TreeRow extends CadElement {
        _render() {
            const tokens = this.attr('path', '').split(' ').filter(Boolean);
            const cells = tokens.map(t => {
                const kind = t.charAt(0);
                const sign = t.charAt(1);
                const box = sign ? `<span class="box">${sign === '+' ? '<i class="v"></i>' : ''}</span>` : '';
                return `<span class="cell ${kind}">${box}</span>`;
            }).join('');
            const sel = this.hasAttribute('selected');
            return `<style>
:host{display:flex;align-items:center;height:18px;padding-left:3px;white-space:nowrap;color:#1c2a44;${this.hasAttribute('bold') ? 'font-weight:700;' : ''}}
.cell{width:18.500px;height:18px;display:flex;align-items:center;justify-content:center;flex:none;background-repeat:no-repeat}
.g{background-image:repeating-linear-gradient(#888 0 1px,transparent 1px 2px);background-size:1px 100%;background-position:center}
.t{background-image:repeating-linear-gradient(#888 0 1px,transparent 1px 2px),repeating-linear-gradient(90deg,#888 0 1px,transparent 1px 2px);background-size:1px 100%,50% 1px;background-position:center,right center}
.l{background-image:repeating-linear-gradient(#888 0 1px,transparent 1px 2px),repeating-linear-gradient(90deg,#888 0 1px,transparent 1px 2px);background-size:1px 50%,50% 1px;background-position:center top,right center}
.box{width:9px;height:9px;box-sizing:border-box;border:1px solid #8b97ab;background:linear-gradient(#2c3e66,#2c3e66) center/5px 1px no-repeat,#f5f7fa;position:relative}
.v{display:block;position:absolute;left:3px;top:1px;width:1px;height:5px;background:#2c3e66}
.lab{margin-left:2px;padding:0 2px;line-height:17px;height:17px;${sel ? 'background:#0078d7;color:#fff;margin-left:0;' : ''}}
</style>${cells}<cad-icon name="${this.attr('icon', '')}" size="18"></cad-icon><span class="lab"><slot></slot></span>`;
        }
    }

    class ScenePanel extends CadElement {
        _render() {
            return `<style>
:host{display:flex;flex-direction:column;flex:none;width:210px;box-sizing:border-box;color:#2f3e58}
.head{display:flex;align-items:center;height:21px;box-sizing:border-box;padding:0 7px 2px 3px;background:linear-gradient(#dbe6f4,#c9d8ec);color:#3b4a62;border-bottom:1px solid #8fa8c8}
.head .sp{flex:1}
.in{flex:1;display:flex;flex-direction:column;background:#cddbee;border:solid #8fa8c8;border-width:0 1px 1px 1px;padding:2px 2px 1px 2px}
.filter{display:flex;justify-content:flex-end;height:20px;background:#fff;align-items:center;gap:2px;padding-right:2px}
.tree{flex:1;background:#fff;border:1px solid #7f8ea6;padding-top:1px;min-height:0}
.tabs{display:flex;height:22px;padding:1px 0 0 0;align-items:center}
.ptab{display:flex;align-items:center;gap:1px;height:19px;padding:0 4px;color:#35496b}
.ptab.on{background:linear-gradient(#fff,#f4f7fb);border-radius:0 0 2px 2px;color:#33435f;margin-left:2px;padding-left:4px;padding-right:6px}
</style>
<div class="head"><span>Scene</span><span class="sp"></span>
<svg width="9" height="11" style="margin-right:10px"><path d="M2.500.5h4v5h2v1h-8v-1h2zM4.500 7v4" fill="none" stroke="#5b6a80"/></svg>
<svg width="9" height="9"><path d="M.5.5l8 8M8.500.5l-8 8" stroke="#5b6a80" stroke-width="1.100"/></svg></div>
<div class="in"><div class="filter"><cad-icon name="clear" size="17"></cad-icon><cad-icon name="find" size="17"></cad-icon></div>
<div class="tree"><slot></slot></div></div>
<div class="tabs"><span class="ptab on"><cad-icon name="find" size="16"></cad-icon>Scene</span>
<span class="ptab"><cad-icon name="props" size="16"></cad-icon>Properties</span>
<span class="ptab" style="margin-left:2px"><cad-icon name="search" size="16"></cad-icon>Search</span></div>`;
        }
    }

    class CadViewport extends CadElement {
        _render() {
            return `<style>
:host{display:block;flex:1;margin-left:5px;position:relative;border-bottom:1px solid #fff;background:linear-gradient(#587aa7 0,#7d9bc0 32%,#a9bdd7 58%,#dce4ef 82%,#fff 100%)}
svg{display:block}
g *{vector-effect:non-scaling-stroke}
text{font:12px "Liberation Sans",sans-serif;fill:#2de6e6;text-anchor:middle}
.dlg{position:absolute;left:431px;top:233px}
</style>
<svg width="1438" height="755" viewBox="242 207 1438 755">
<defs>
<linearGradient id="sideA" gradientUnits="userSpaceOnUse" x1="90" y1="170" x2="300" y2="380"><stop offset="0" stop-color="#7f7f8c"/><stop offset=".2" stop-color="#d2d2da"/><stop offset=".42" stop-color="#93939f"/><stop offset=".7" stop-color="#757583"/><stop offset="1" stop-color="#6f6f7d"/></linearGradient>
<linearGradient id="sideB" gradientUnits="userSpaceOnUse" x1="790" y1="1090" x2="1150" y2="1450"><stop offset="0" stop-color="#8c8c98"/><stop offset=".1" stop-color="#dcdce3"/><stop offset=".28" stop-color="#93939f"/><stop offset=".55" stop-color="#6f6f7d"/><stop offset=".72" stop-color="#7b7b88"/><stop offset=".84" stop-color="#d8d8df"/><stop offset=".93" stop-color="#9b9ba6"/><stop offset="1" stop-color="#8a8a96"/></linearGradient>
<linearGradient id="holeG" gradientUnits="userSpaceOnUse" x1="1050" y1="1040" x2="1190" y2="1190"><stop offset="0" stop-color="#6f6f7c"/><stop offset=".3" stop-color="#8f8f9b"/><stop offset=".48" stop-color="#d6d6dd"/><stop offset=".65" stop-color="#84848f"/><stop offset="1" stop-color="#8a8a96"/></linearGradient>
</defs>
<g transform="translate(400 230) scale(.42092 .44643)" stroke="#3a3a46" stroke-width="1" stroke-linejoin="round">
  <path d="M215 150L60 245L47 315L60 385L90 450L150 540L220 625L290 685L410 780L540 900L700 700L475 545L450 525L380 455L320 380L260 290L225 210z" fill="url(#sideA)"/>
  <path d="M450 525L290 685L410 780L430 680L475 545z" fill="#747482"/>
  <path d="M785 1175L790 1150L850 1085L950 1000L955 1030L985 1100L1040 1165L1120 1230L1225 1272L1270 1265L1105 1420L1060 1432L1000 1415L930 1375L870 1320L820 1260z" fill="url(#sideB)"/>
  <path d="M865 845L975 932L955 975L850 1070L825 1085z" fill="#6f6f7d"/>
  <path d="M955 975L850 1070L840 1082L950 1000z" fill="#c7c7d0"/>
  <path d="M215 150L225 95L255 55L305 33L380 33L460 55L545 95L640 160L730 225L1050 470L1200 470L1240 462L1280 472L1440 585L1500 660L1515 720L1500 790L1440 915L1375 865L1205 1018L1275 1070L1295 1025L1367 1080L1300 1230L1270 1265L1225 1272L1120 1230L1040 1165L985 1100L955 1030L950 1000L975 932L865 845L700 450L605 278L395 250L510 470L450 525L380 455L320 380L260 290L225 210z" fill="#b7b7c5"/>
  <path d="M510 470L450 525L475 545L540 430z" fill="#b7b7c5" stroke="none"/>
  <path d="M395 250L605 278L475 400z" fill="#8d8d97"/>
  <path d="M605 278L700 450L540 430L505 465L475 400z" fill="#777785"/>
  <path d="M1315 762L1388 815L1368 850L1205 1012z" fill="#777785"/>
  <path d="M1375 865L1440 915L1310 1035L1295 1025L1275 1070L1205 1018z" fill="#6f6f7d"/>
  <ellipse cx="1125" cy="1108" rx="112" ry="62" transform="rotate(38 1125 1108)" fill="url(#holeG)"/>

  <path d="M540 428L740 470L915 760L850 768L430 680z" fill="#a5a588" stroke="none"/>
  <path d="M430 680L850 768L705 1510L293 1415z" fill="#919179" stroke="none"/>
  <path d="M850 768L905 760L865 845L825 1085L785 1175L820 1262L705 1510z" fill="#a5a586" stroke="none"/>
  <path d="M293 1415L705 1510L700 1498L300 1405z" fill="#b0ae82" stroke="none"/>
  <g stroke="#ecec58" fill="none" stroke-width="1.200">
    <path d="M540 428L740 470M430 680L650 730L850 768M430 680L293 1415L705 1510L820 1262L915 760M540 428L430 680M540 428L403 1168L820 1262M403 1168L293 1415M850 768L725 1470L705 1510"/>
  </g>
  <g stroke="#22e4e4" fill="none" stroke-width="1.100">
    <path d="M552 358L545 400M552 390L720 425M800 440L910 470M968 458L960 760L930 880M925 915L868 1270M835 1265L905 1280M545 395L505 480M480 540L440 625M425 640L448 635M420 925L590 962M660 980L825 1012M415 912L418 938"/>
  </g>
  <g fill="#22e4e4" stroke="none">
    <path d="M552 390L572 386L570 402zM545 392L548 412L532 405zM438 632L436 610L450 618zM420 925L440 915L437 935zM830 1012L808 1006L808 1022zM868 1272L858 1248L878 1250z"/>
  </g>
  <g stroke="#111" fill="none"><path d="M695 813L680 843M868 1024L835 1016M553 1125L568 1093M380 915L415 922M549 1372L563 1295"/></g>
  <path d="M563 1295L556 1342" stroke="#1d8f8f" fill="none"/>
  <g stroke="#333" stroke-width=".8">
    <ellipse cx="695" cy="813" rx="9" ry="9" fill="#c8102e"/><ellipse cx="868" cy="1024" rx="9" ry="9" fill="#c8102e"/>
    <ellipse cx="553" cy="1125" rx="9" ry="9" fill="#c8102e"/><ellipse cx="380" cy="915" rx="9" ry="9" fill="#f5ee1e"/>
    <ellipse cx="549" cy="1372" rx="9" ry="9" fill="#c8102e"/><ellipse cx="557" cy="1342" rx="7" ry="7" fill="#1d8f8f"/>
  </g>
  <path d="M566 1336V1326L576 1320L587 1326V1336z" fill="#fff" stroke="#111"/><path d="M572 1336V1328H581V1336z" fill="#111"/>
  <path d="M708 1512L713 1470H704L717 1440L730 1472H720L715 1512z" fill="#1b9a9a" stroke="none"/>
</g>
<text x="716" y="428">1.572</text>
<text x="609" y="463">1.969</text>
<text x="663" y="666">1.572</text>
<text x="788" y="636">3.413</text>
<rect x="682" y="910.500" width="19.500" height="19.500" fill="#fff" stroke="#111"/>
<path d="M687 917h7v7h-7z" fill="#aaa" stroke="#333"/><path d="M689 915h7v7h-7z" fill="#ddd" stroke="#333"/>
<path d="M691.500 912v3M691.500 925v3M684 920h3M697 920h3" stroke="#d01616"/>
<g>
  <path d="M283 910l-2-6-2 8 3-1zM281 923l-17-5 3 3-2 2 9 1 7 1z" fill="#4fd24f" stroke="#1f8f1f" stroke-width=".5"/>
  <path d="M279 921l1-10 3-4 1 9-1 5z" fill="#5a63d8" stroke="#2a2f90" stroke-width=".5"/>
  <path d="M283 921l1-6 2 1-1 5z" fill="#d02020"/>
  <text x="285" y="903" style="font:bold 10px 'Liberation Sans';fill:#1414ee">Z</text>
  <text x="287" y="914" style="font:10px 'Liberation Sans';fill:#ee1414">X</text>
  <text x="253" y="921" style="font:10px 'Liberation Sans';fill:#30d030">Y</text>
</g>
</svg>
<edit-sizebox class="dlg"></edit-sizebox>`;
        }
    }

    class EditSizebox extends CadElement {
        _render() {
            const row = (label, value, focus) => `<label>${label}</label><div class="in${focus ? ' f' : ''}">${focus ? `<span class="sel">${value}</span><span class="car"></span>` : value}</div>`;
            return `<style>
:host{display:block;width:334px;height:129px;box-sizing:border-box;border:1px solid #3a68b5;background:#f0f0f0;font:12px "Liberation Sans",sans-serif;letter-spacing:0;color:#111;box-shadow:0 0 3px rgba(0,0,0,.2)}
.tb{display:flex;align-items:center;height:25px;background:#fff;padding-left:3px;justify-content:space-between;padding-right:10px;font:11.5px "Open Sans",sans-serif;letter-spacing:-.1px;color:#1c1c1c}
.body{display:flex;padding:10px 12px 0 11px}
.form{display:grid;grid-template-columns:49px 150px;row-gap:5.500px;align-items:center}
label{display:block}
.in{box-sizing:border-box;height:23px;background:#fff;border:1px solid #7a7a7a;padding:0 2px;line-height:18px;display:flex;align-items:flex-start}
.in.f{border-color:#0078d7;padding-top:2px}
.sel{background:#0078d7;color:#fff;line-height:14px;height:14px}
.car{width:1px;height:14px;background:#e8781c}
.btns{display:flex;flex-direction:column;margin-left:37px;padding-top:2px;width:73px}
.b{box-sizing:border-box;height:21px;background:#e1e1e1;border:1px solid #adadad;text-align:center;line-height:18px;margin-bottom:4.500px}
.b.d{border:2px solid #0078d7;line-height:17px}
</style>
<div class="tb"><span>Edit Sizebox</span><svg width="11" height="11"><path d="M.5.5l10 10M10.500.5l-10 10" stroke="#222" stroke-width="1.100"/></svg></div>
<div class="body"><div class="form">${row('Length:', '1.969')}${row('Width:', '1.072', true)}${row('Height:', '3.413')}</div>
<div class="btns"><div class="b d">OK</div><div class="b">Cancel</div><div class="b">Help</div></div></div>`;
        }
    }

    class CatalogStrip extends CadElement {
        _render() {
            return `<style>
:host{display:flex;height:25px;align-items:flex-start;padding:4px 0 0 5px;box-sizing:border-box}
.t{display:flex;align-items:center;gap:2px;width:108px;height:20px;box-sizing:border-box;padding:0 0 1px 2px;background:linear-gradient(#fdf3cf,#fbe5a5);border:1px solid #a9b3bd;color:#7d8793;white-space:nowrap}
</style><span class="t"><cad-icon name="catalog" size="16"></cad-icon>Catalog Browser</span>`;
        }
    }

    class StatusBar extends CadElement {
        _render() {
            const drop = '<cad-icon name="arrow" size="6" style="margin-left:3px"></cad-icon>';
            const run = iconRun([
                {n: 'zoomfit', cx: 1153, w: 18}, {n: 'zoomwin', cx: 1176, w: 18}, {n: 'arrow', cx: 1195, w: 7, s: 6},
                {n: 'boxred', cx: 1210, w: 18}, {n: 'arrow', cx: 1230, w: 7, s: 6}, {n: 'cubeblue', cx: 1246, w: 18},
                {n: 'arrow', cx: 1265, w: 7, s: 6}, {n: 'movecam', cx: 1283, w: 18}, {n: 'arrow', cx: 1300, w: 7, s: 6},
                {n: 'prism', cx: 1317, w: 18}, {n: 'glasses', cx: 1340, w: 18}, {n: 'arrow', cx: 1353, w: 7, s: 6},
                {n: 'lightbox', cx: 1377, w: 30, hl: 1, extra: drop}, {n: 'part', cx: 1405, w: 18}, {n: 'arrow', cx: 1420, w: 7, s: 6},
                {n: 'greycursor', cx: 1439, w: 18}, {n: 'cursor', cx: 1463, w: 24, hl: 1}, {n: 'cursorgrey', cx: 1490, w: 18}
            ], 1144, 17);
            return `<style>
:host{display:flex;align-items:center;height:23px;box-sizing:border-box;border-top:1px solid #8ea5c5;background:linear-gradient(#e3ebf5,#cbd9ea);color:#3d4e6b;white-space:nowrap;padding-bottom:1px}
.a{width:914px;padding-left:2px;margin-top:-2px}.b{width:138px;margin-top:-2px}.c{width:90px;margin-top:-2px}
${RUN_CSS}
.combo{display:flex;align-items:center;flex:none;height:20px;background:linear-gradient(#f6f9fd,#eaf0f8);color:#222;padding-left:3px;box-sizing:border-box}
.combo span{flex:1;margin-top:-2px}
</style><span class="a">For Help, press F1</span><span class="b">View size: 1437 x&nbsp;&nbsp;755</span><span class="c">Units: in, deg</span>${run}
<span class="combo" style="width:88px;margin-left:1px">
<span>Drilldown: Int</span><cad-icon name="arrow" size="7" style="margin:0 3px"></cad-icon></span>
<span class="combo" style="width:64px;margin-left:2px"><span>Default</span><cad-icon name="arrow" size="7" style="margin:0 3px"></cad-icon></span>
<cad-icon name="orgy" size="16" style="margin-left:3px"></cad-icon>`;
        }
    }

    class CadApp extends CadElement {
        _render() {
            return `<style>
:host{display:flex;flex-direction:column;width:1680px;height:1014px;overflow:hidden}
.main{display:flex;height:755px}
.task{height:4px;background:linear-gradient(90deg,#000 48px,#2b2b2b 48px)}
</style>
<cad-header></cad-header>
<ribbon-bar>
  <ribbon-group w="66" label="Reference"><ribbon-big icon="datum" w="65" arrow>Datum<br>Plane</ribbon-big></ribbon-group>
  <ribbon-group w="222" label="Feature">
    <ribbon-big icon="extrude" w="58" arrow>Extrude<br>Wizard</ribbon-big>
    <ribbon-col w="67.500"><ribbon-small icon="spin" arrow>S<u>p</u>in</ribbon-small><ribbon-small icon="sweep" arrow><u>S</u>weep</ribbon-small><ribbon-small icon="loft" arrow><u>L</u>oft</ribbon-small></ribbon-col>
    <ribbon-col w="96"><ribbon-small icon="thread">Thread</ribbon-small><ribbon-small icon="thicken">Thicken</ribbon-small><ribbon-small icon="hole">Custom Hole</ribbon-small></ribbon-col>
  </ribbon-group>
  <ribbon-group w="104" label="Quick Pick Shapes"><ribbon-big icon="quickblock" w="103" ml="2" arrow>Quick<br>Block</ribbon-big></ribbon-group>
  <ribbon-group w="405" label="Modify" pad="4">
    <ribbon-big icon="blendbig" w="46"><u>B</u>lend<br>Edges</ribbon-big>
    <ribbon-big icon="chamferbig" w="46"><u>C</u>hamfer<br>Edges</ribbon-big>
    <ribbon-col w="84" ml="5.500"><ribbon-small icon="draft"><u>D</u>raft Faces</ribbon-small><ribbon-small icon="shell"><u>S</u>hell Part</ribbon-small><ribbon-small icon="boolean" disabled>Boolean</ribbon-small></ribbon-col>
    <ribbon-col w="143"><ribbon-small icon="split">Split</ribbon-small><ribbon-small icon="stretch" disabled>Stretch Part/Assembly</ribbon-small><ribbon-small icon="delbody" disabled>Delete Body</ribbon-small></ribbon-col>
    <ribbon-col w="70"><ribbon-small icon="rib">Rib</ribbon-small><ribbon-small icon="trim"><u>T</u>rim</ribbon-small><ribbon-small icon="emboss" arrow><u>E</u>mboss</ribbon-small></ribbon-col>
  </ribbon-group>
  <ribbon-group w="162" label="Transform" pad="7">
    <ribbon-big icon="pattern" w="40">Pattern<br>Feature</ribbon-big>
    <ribbon-col w="108" ml="4"><ribbon-small icon="scale">Scale Body</ribbon-small><ribbon-small icon="copybody" disabled>Copy Body</ribbon-small><ribbon-small icon="mirror" arrow><u>M</u>irror Feature</ribbon-small></ribbon-col>
  </ribbon-group>
  <ribbon-group w="207" label="Direct Edit" pad="8.500">
    <ribbon-col w="87"><ribbon-small icon="moveface">Mo<u>v</u>e Face</ribbon-small><ribbon-small icon="matchface"><u>M</u>atch Face</ribbon-small><ribbon-small icon="offsetface"><u>O</u>ffset Face</ribbon-small></ribbon-col>
    <ribbon-col w="108"><ribbon-small icon="deleteface"><u>D</u>elete Face</ribbon-small><ribbon-small icon="editradius" disabled>Edit Face Radius</ribbon-small><ribbon-small icon="splitfaces">Split <u>F</u>aces</ribbon-small></ribbon-col>
  </ribbon-group>
</ribbon-bar>
<sel-bar></sel-bar>
<doc-tabs></doc-tabs>
<div class="main">
  <side-tools></side-tools>
  <scene-panel>
    <tree-row icon="scene">Scene1</tree-row>
    <tree-row path="t+" icon="coord">Global Coordinate System</tree-row>
    <tree-row path="t-" icon="part" bold>Part1</tree-row>
    <tree-row path="g t+" icon="yblock">Block</tree-row>
    <tree-row path="g t+" icon="yblock">Block</tree-row>
    <tree-row path="g t" icon="blend">Blend3</tree-row>
    <tree-row path="g t" icon="blend">Blend3</tree-row>
    <tree-row path="g t+" icon="hblock">H Block</tree-row>
    <tree-row path="g t+" icon="hblock">H Block</tree-row>
    <tree-row path="g t+" icon="hblock">H Block</tree-row>
    <tree-row path="g t+" icon="hcyl">H Cylinder</tree-row>
    <tree-row path="g t+" icon="hcyl">H Cylinder</tree-row>
    <tree-row path="g l+" icon="yblock" selected>Block</tree-row>
    <tree-row path="t+" icon="camera">Cameras</tree-row>
    <tree-row path="l+" icon="lights">Lights</tree-row>
  </scene-panel>
  <cad-viewport></cad-viewport>
</div>
<catalog-strip></catalog-strip>
<status-bar></status-bar>
<div class="task"></div>`;
        }
    }

    customElements.define('cad-icon', CadIcon);
    customElements.define('cad-header', CadHeader);
    customElements.define('ribbon-bar', RibbonBar);
    customElements.define('ribbon-group', RibbonGroup);
    customElements.define('ribbon-big', RibbonBig);
    customElements.define('ribbon-col', RibbonCol);
    customElements.define('ribbon-small', RibbonSmall);
    customElements.define('sel-bar', SelBar);
    customElements.define('doc-tabs', DocTabs);
    customElements.define('side-tools', SideTools);
    customElements.define('tree-row', TreeRow);
    customElements.define('scene-panel', ScenePanel);
    customElements.define('cad-viewport', CadViewport);
    customElements.define('edit-sizebox', EditSizebox);
    customElements.define('catalog-strip', CatalogStrip);
    customElements.define('status-bar', StatusBar);
    customElements.define('cad-app', CadApp);
})();
</script>
</body>
</html>
